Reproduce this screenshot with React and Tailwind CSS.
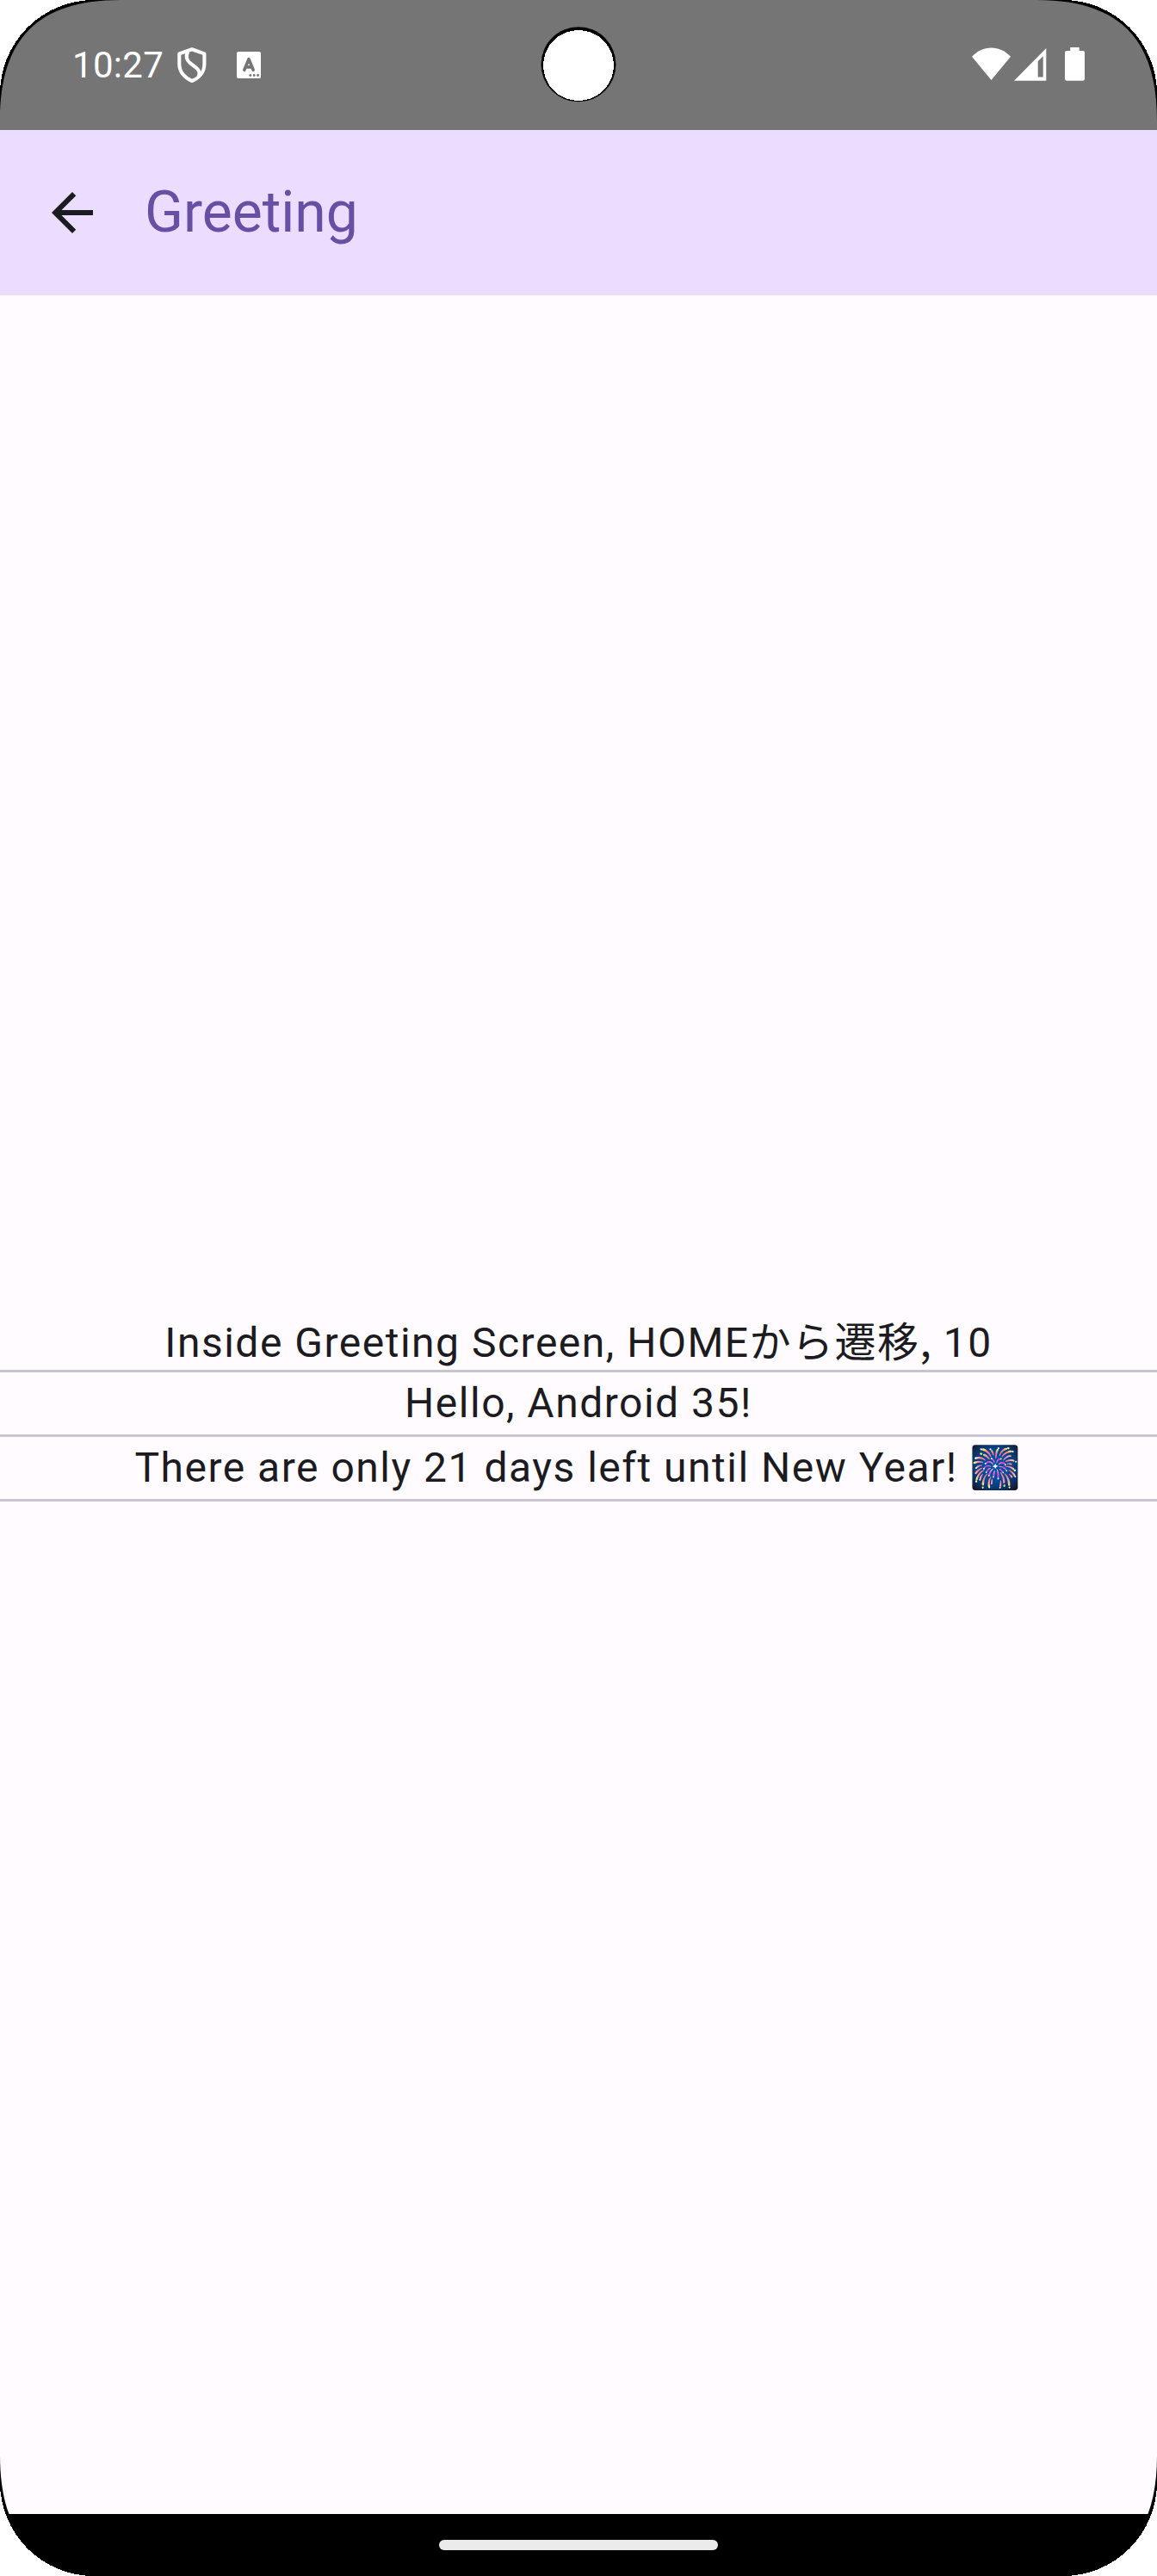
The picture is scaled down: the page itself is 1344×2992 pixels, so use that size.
function Corner({ className }) {
  return (
    <svg className={`absolute size-[140px] ${className}`} viewBox="0 0 140 140" aria-hidden="true">
      <path d="M0 0H140C44.5 0 0 44.5 0 140Z" fill="#000" />
      <path d="M0 0H109A109 109 0 0 0 0 109Z" fill="#fff" shapeRendering="crispEdges" />
    </svg>
  );
}

function ShieldIcon() {
  return (
    <svg className="ml-[17px] h-[42px] w-[36px]" viewBox="0 0 36 42" fill="none" stroke="#fff" strokeWidth="4.1" strokeLinejoin="round">
      <path d="M18 2.2L32.4 7.4V19.5C32.4 28.5 26.5 35.6 18 39C9.5 35.6 3.3 28.5 3.3 19.5V7.4Z" />
      <path d="M13.2 5C10.5 10.5 11.5 14.8 16 18.3L22.5 23.4C27 27 28 30.5 25.3 34.5" />
    </svg>
  );
}

function KeyboardIcon() {
  return (
    <svg className="ml-[34px] h-[31px] w-[28px]" viewBox="0 0 28 31">
      <rect width="28" height="31" rx="2" fill="#fff" />
      <path d="M8.8 21.2L14 8.7L19.2 21.2M10.3 17.9H17.7" fill="none" stroke="#757575" strokeWidth="3.6" strokeLinecap="round" strokeLinejoin="round" />
      <g fill="#757575">
        <circle cx="15.8" cy="27.5" r="1.4" />
        <circle cx="20.2" cy="27.5" r="1.4" />
        <circle cx="24.6" cy="27.5" r="1.4" />
      </g>
    </svg>
  );
}

function WifiIcon() {
  return (
    <svg className="h-[39px] w-[45px]" viewBox="0 0 45 39">
      <path d="M22.5 38L0 10.800C6.200 4 14 .4 22.500 .4S38.800 4 45 10.800Z" fill="#fff" />
    </svg>
  );
}

function SignalIcon() {
  return (
    <svg className="ml-[4px] h-[39px] w-[38px]" viewBox="0 0 38 39">
      <path fillRule="evenodd" d="M0 38.700L37.300 1V38.700ZM27.700 16.200V34.500H33.700V10.200Z" fill="#fff" />
    </svg>
  );
}

function BatteryIcon() {
  return (
    <svg className="ml-[21px] h-[39px] w-[23px]" viewBox="0 0 23 39">
      <path d="M6.200 0H16.700V4H21A2 2 0 0 1 23 6V36.500A2.300 2.300 0 0 1 20.700 38.800H2.300A2.300 2.300 0 0 1 0 36.500V6A2 2 0 0 1 2 4H6.200Z" fill="#fff" />
    </svg>
  );
}

function StatusBar() {
  return (
    <div className="relative flex h-[151px] shrink-0 items-center justify-between bg-[#757575] px-[84px] text-white">
      <div className="flex items-center">
        <span className="w-[104px] text-[42px] leading-[50px] tracking-[0.3px] whitespace-nowrap">10:27</span>
        <ShieldIcon />
        <KeyboardIcon />
      </div>
      <svg className="absolute top-[31px] left-[628px] size-[88px]" viewBox="0 0 88 88" aria-hidden="true">
        <circle cx="44" cy="43.8" r="43.5" fill="#000" />
        <circle cx="44" cy="45" r="41" fill="#fff" shapeRendering="crispEdges" />
      </svg>
      <div className="mb-0.5 flex items-center">
        <WifiIcon />
        <SignalIcon />
        <BatteryIcon />
      </div>
    </div>
  );
}

function TopAppBar() {
  return (
    <header className="flex h-[192px] shrink-0 items-center bg-[#eaddff] pl-12">
      <button type="button" aria-label="Back" className="size-[72px]">
        <svg className="size-[72px]" viewBox="0 0 24 24" fill="#1c1b1f">
          <path d="M20 11H7.83l5.59-5.59L12 4l-8 8 8 8 1.41-1.41L7.83 13H20v-2z" />
        </svg>
      </button>
      <h1 className="ml-12 text-[66px] leading-[84px] font-normal text-[#6750a4]">Greeting</h1>
    </header>
  );
}

export default function App() {
  return (
    <div className="relative flex h-[2992px] w-[1344px] flex-col overflow-hidden bg-[#fffbff] font-['Roboto','Noto_Sans_CJK_JP',sans-serif]">
      <StatusBar />
      <TopAppBar />
      <main className="flex flex-1 flex-col justify-center text-center text-[48px] leading-[72px] tracking-[1.5px] whitespace-nowrap text-[#1c1b1f]">
        <p className="h-[75px] border-b-[3px] border-[#cac4d0] leading-[82px]">
          Inside Greeting Screen, HOMEから遷移<span className="font-['Noto_Sans_CJK_JP',sans-serif] leading-none">, </span>10
        </p>
        <p className="h-[75px] border-b-[3px] border-[#cac4d0]">Hello, Android 35!</p>
        <p className="h-[75px] border-b-[3px] border-[#cac4d0]">There are only 21 days left until New Year! 🎆</p>
      </main>
      <nav className="flex h-[72px] shrink-0 items-center justify-center bg-black">
        <div className="h-3 w-[324px] rounded-full bg-[#ebebeb]" />
      </nav>
      <Corner className="top-0 left-0" />
      <Corner className="top-0 right-0 -scale-x-100" />
      <Corner className="bottom-0 left-0 -scale-y-100" />
      <Corner className="right-0 bottom-0 -scale-100" />
    </div>
  );
}
